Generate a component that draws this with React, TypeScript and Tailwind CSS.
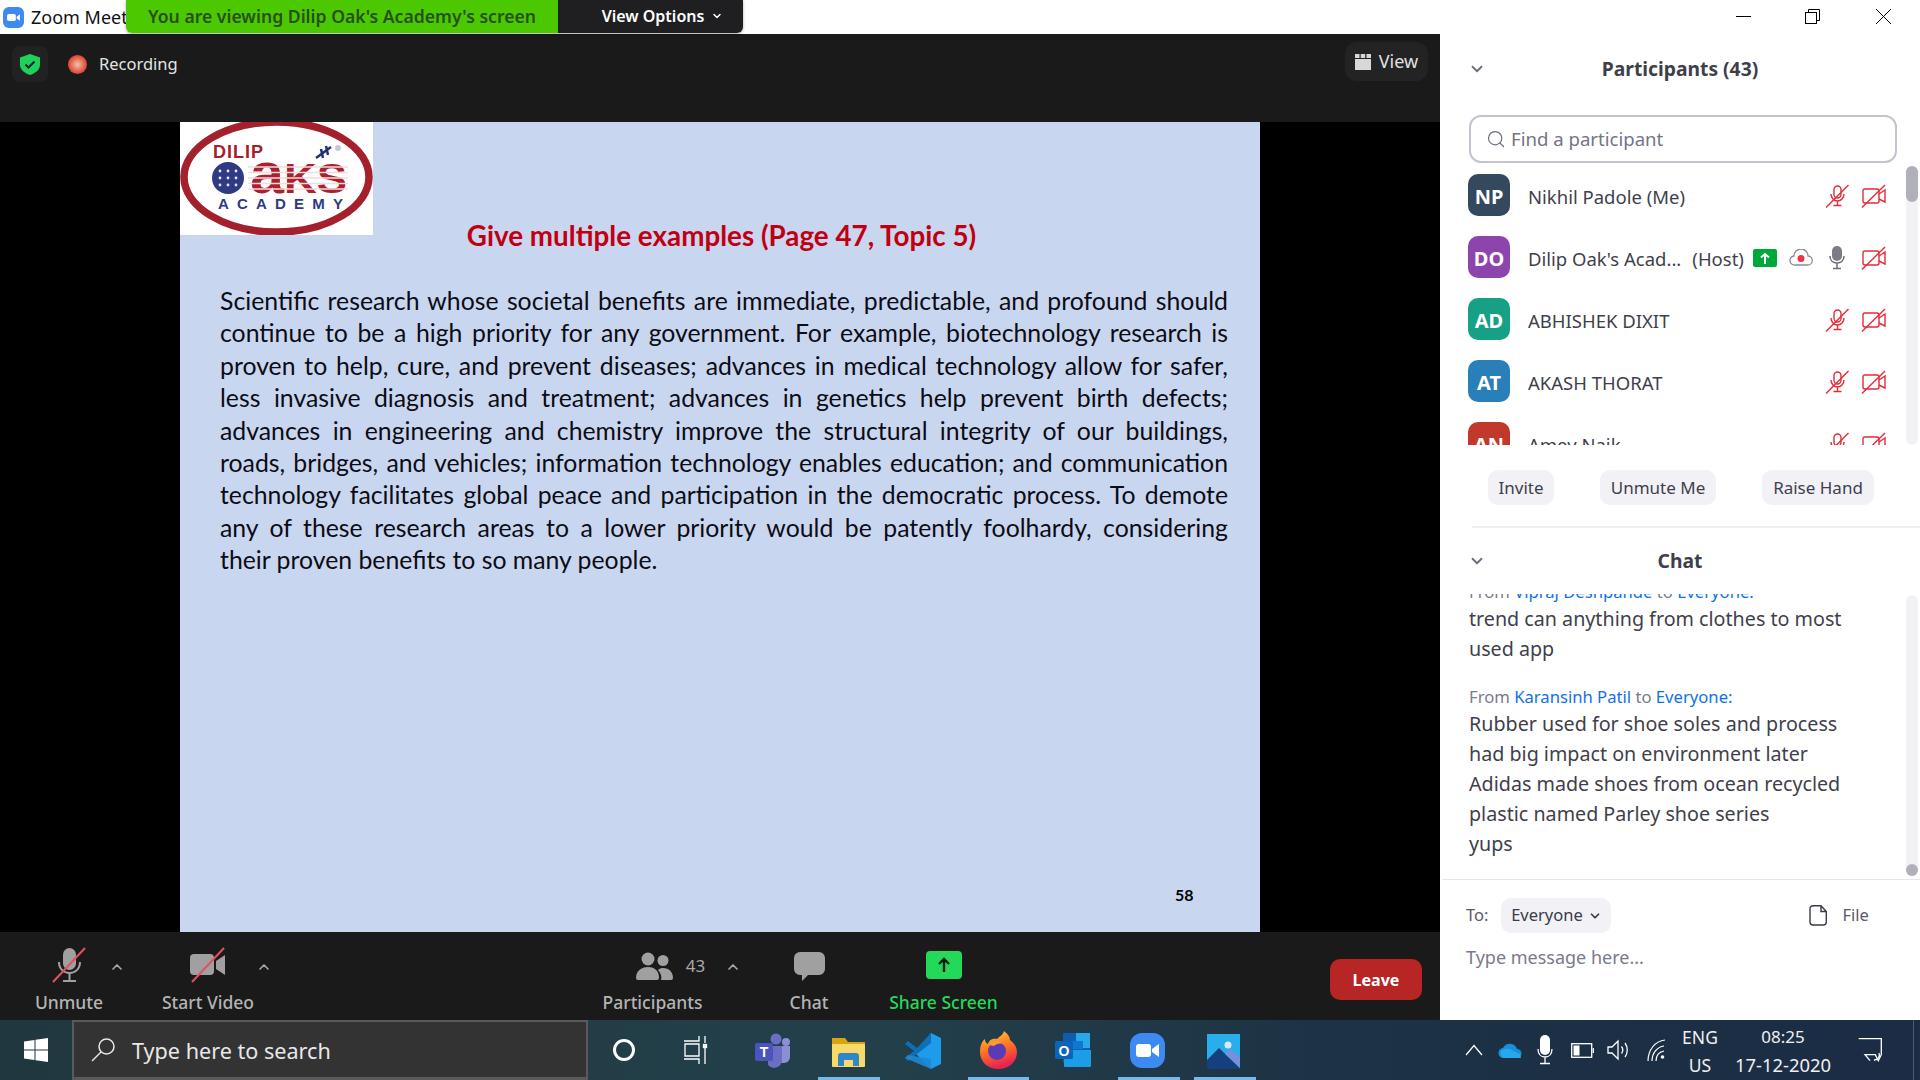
import { ChevronDown, ChevronUp, Search } from 'lucide-react'

const slideLines = [
  'Scientific research whose societal benefits are immediate, predictable, and profound should',
  'continue to be a high priority for any government. For example, biotechnology research is',
  'proven to help, cure, and prevent diseases; advances in medical technology allow for safer,',
  'less invasive diagnosis and treatment; advances in genetics help prevent birth defects;',
  'advances in engineering and chemistry improve the structural integrity of our buildings,',
  'roads, bridges, and vehicles; information technology enables education; and communication',
  'technology facilitates global peace and participation in the democratic process. To demote',
  'any of these research areas to a lower priority would be patently foolhardy, considering',
]

const participants = [
  { initials: 'NP', name: 'Nikhil Padole (Me)', color: 'bg-[#34495e]' },
  { initials: 'DO', name: "Dilip Oak's Acad...", color: 'bg-[#8e44ad]', host: true },
  { initials: 'AD', name: 'ABHISHEK DIXIT', color: 'bg-[#16a085]' },
  { initials: 'AT', name: 'AKASH THORAT', color: 'bg-[#2980b9]' },
  { initials: 'AN', name: 'Amey Naik', color: 'bg-[#c0392b]' },
]

function MutedMic({ color = '#e02d3c' }: { color?: string }) {
  return (
    <svg width="24" height="24" viewBox="0 0 24 24" fill="none" stroke={color} strokeWidth="1.4">
      <rect x="9" y="2" width="7" height="12" rx="3.5" />
      <path d="M6 10c0 4 3 7 6.5 7s6.5-3 6.5-7M12.5 17v4M8.5 21.500h8" />
      <path d="M1 23.500 23.500 1" />
    </svg>
  )
}

function MutedCam() {
  return (
    <svg width="25" height="24" viewBox="0 0 25 24" fill="none" stroke="#e02d3c" strokeWidth="1.4">
      <path d="M4 5h12a2 2 0 0 1 2 2v10a2 2 0 0 1-2 2H4a2 2 0 0 1-2-2V7a2 2 0 0 1 2-2z" />
      <path d="m18 10 6-4v12l-6-3" />
      <path d="M1 23.500 24 1" />
    </svg>
  )
}

function HostMic() {
  return (
    <svg width="16" height="24" viewBox="0 0 16 24">
      <rect x="3" y="0" width="10" height="15" rx="5" fill="#7c7c88" />
      <path d="M1 10c0 4.500 3 7 7 7s7-2.500 7-7M8 17v5M4 22.500h8" fill="none" stroke="#6d6d78" strokeWidth="1.500" />
    </svg>
  )
}

function ZoomGlyph({ size }: { size: number }) {
  return (
    <svg width={size} height={size} viewBox="0 0 36 36">
      <rect width="36" height="36" rx="10" fill="#3d8bf2" />
      <rect x="7" y="12" width="15" height="12" rx="3" fill="#fff" />
      <path d="m23.500 16.500 5.500-4v11l-5.500-4z" fill="#fff" />
    </svg>
  )
}

function DilipLogo() {
  return (
    <div className="w-[193px] h-[113px] bg-white">
      <svg width="193" height="113" viewBox="0 0 193 113">
        <ellipse cx="96.500" cy="55" rx="92.500" ry="55" fill="#fff" stroke="#a3202c" strokeWidth="7.500" />
        <text x="33" y="36" fontSize="18" fontFamily="Liberation Sans" fill="#a3202c" fontWeight="700" textLength="50">DILIP</text>
        <circle cx="48" cy="56" r="16" fill="#2f3a84" />
        <g fill="#e8e8f2">
          <circle cx="40" cy="49" r="1.400" /><circle cx="48" cy="49" r="1.400" /><circle cx="56" cy="49" r="1.400" />
          <circle cx="40" cy="56" r="1.400" /><circle cx="48" cy="56" r="1.400" /><circle cx="56" cy="56" r="1.400" />
          <circle cx="40" cy="63" r="1.400" /><circle cx="48" cy="63" r="1.400" /><circle cx="56" cy="63" r="1.400" />
        </g>
        <text x="70" y="71" fontFamily="Liberation Sans" fontWeight="700" fill="#a9212f" textLength="97" lengthAdjust="spacingAndGlyphs">
          <tspan fontSize="58">a</tspan>
          <tspan fontSize="43">KS</tspan>
        </text>
        <g stroke="#f3dcdc" strokeWidth="1.500">
          <path d="M68 45h100M68 50.500h100M68 56h100M68 61.500h100M68 67h100" />
        </g>
        <path d="M136 36l15-11M143 36l-2-9M148 33l-2-9" stroke="#24306e" strokeWidth="2.500" fill="none" />
        <circle cx="158" cy="26" r="3" fill="#c8c8d4" />
        <text x="38" y="87" fontSize="15" fontFamily="Liberation Sans" fontWeight="700" fill="#2f3a84" textLength="125">ACADEMY</text>
      </svg>
    </div>
  )
}

function ToolbarMic() {
  return (
    <svg width="34" height="36" viewBox="0 0 34 36">
      <rect x="11" y="1" width="13" height="22" rx="6.500" fill="#a0a0a0" />
      <path d="M7 15c0 7 5 11 10.500 11S28 22 28 15M17.500 26v7M11 34h13" fill="none" stroke="#a0a0a0" strokeWidth="2" />
      <path d="M1 35 33 1" stroke="#e5505c" strokeWidth="2" />
    </svg>
  )
}

function ToolbarCam() {
  return (
    <svg width="38" height="36" viewBox="0 0 38 36">
      <rect x="1" y="7" width="24" height="21" rx="4" fill="#a0a0a0" />
      <path d="m27 14 9-6v20l-9-6z" fill="#a0a0a0" />
      <path d="M3 35 35 1" stroke="#e5505c" strokeWidth="2" />
    </svg>
  )
}

function ToolbarPeople() {
  return (
    <svg width="37" height="28" viewBox="0 0 37 28" fill="#a0a0a0">
      <circle cx="12" cy="7" r="6.500" />
      <circle cx="27" cy="8.500" r="5.500" />
      <path d="M0 26c0-7 5-11 12-11s11 4 11 11a2 2 0 0 1-2 2H2a2 2 0 0 1-2-2z" />
      <path d="M25 28c1-3 0-7-3-10 1.500-1.500 3.500-2 5-2 6 0 10 4 10 10a2 2 0 0 1-2 2z" />
    </svg>
  )
}

function ToolbarChat() {
  return (
    <svg className="mt-[3px]" width="31" height="29" viewBox="0 0 31 29">
      <path d="M6 0h19a6 6 0 0 1 6 6v11a6 6 0 0 1-6 6H14l-6 6v-6H6a6 6 0 0 1-6-6V6a6 6 0 0 1 6-6z" fill="#a0a0a0" />
    </svg>
  )
}

function ToolbarItem({ label, icon, green, className }: { label: string; icon: React.ReactNode; green?: boolean; className: string }) {
  return (
    <div className={`flex flex-col items-center ${className}`}>
      <div className="h-[36px] flex items-center justify-center">{icon}</div>
      <span className={`mt-[7px] text-[17.500px] leading-[24px] font-medium whitespace-nowrap ${green ? 'text-[#23d959]' : 'text-[#b4b4b4]'}`}>
        {label}
      </span>
    </div>
  )
}

function Caret({ className }: { className: string }) {
  return <ChevronUp className={`w-[16px] h-[16px] text-[#a8a8a8] ${className}`} strokeWidth={2.5} />
}

function Toolbar() {
  return (
    <div className="h-[88px] bg-[#1a1a1a] flex items-start pt-[15px] font-['Noto_Sans',sans-serif]">
      <ToolbarItem label="Unmute" icon={<ToolbarMic />} className="ml-[36px] w-[66px]" />
      <Caret className="mt-[12px] ml-[7px]" />
      <ToolbarItem label="Start Video" icon={<ToolbarCam />} className="ml-[36px] w-[94px]" />
      <Caret className="mt-[12px] ml-[1px]" />
      <div className="ml-[332px] w-[97px] flex flex-col items-center">
        <div className="h-[36px] flex items-center gap-[13px] ml-[36px] mt-[1px]">
          <ToolbarPeople />
          <span className="text-[17px] text-[#a8a8a8] font-normal">43</span>
        </div>
        <span className="mt-[6px] text-[17.500px] leading-[24px] font-medium text-[#b4b4b4] whitespace-nowrap">Participants</span>
      </div>
      <Caret className="mt-[12px] ml-[24px]" />
      <ToolbarItem label="Chat" icon={<ToolbarChat />} className="ml-[48px] w-[40px]" />
      <ToolbarItem
        label="Share Screen"
        green
        icon={
          <div className="w-[36px] h-[28px] rounded-[4px] bg-[#23d959] flex items-center justify-center">
            <svg width="14" height="16" viewBox="0 0 14 16" fill="none" stroke="#0f1a10" strokeWidth="2.400">
              <path d="M7 15V2M2 7l5-5 5 5" />
            </svg>
          </div>
        }
        className="ml-[61px] w-[107px]"
      />
      <button className="ml-[333px] mt-[12px] w-[92px] h-[41px] rounded-[10px] bg-[#b72525] text-white text-[16px] font-bold">
        Leave
      </button>
    </div>
  )
}

function Meeting() {
  return (
    <div className="w-[1440px] flex flex-col relative">
      <div className="h-[34px] bg-white flex items-center pl-[3px] gap-[7px] font-['Noto_Sans',sans-serif] overflow-hidden">
        <ZoomGlyph size={21} />
        <span className="text-[18px] text-[#111] whitespace-nowrap">Zoom Meeting</span>
      </div>

      {/* view banner over the title bar */}
      <div className="absolute left-[126px] top-0 h-[33px] flex rounded-b-[6px] overflow-hidden font-['Noto_Sans',sans-serif] shadow-[0_1px_3px_rgba(0,0,0,0.35)]">
        <div className="w-[432px] bg-[#4bc800] flex items-center justify-center pb-[1px] text-[17.600px] font-semibold text-[#28501a]">
          You are viewing Dilip Oak&apos;s Academy&apos;s screen
        </div>
        <div className="w-[185px] bg-[#1f1f22] flex items-center justify-center gap-[7px] pl-[24px] pb-[2px] text-[16px] font-semibold text-white">
          View Options
          <ChevronDown className="w-[12px] h-[12px]" strokeWidth={3} />
        </div>
      </div>

      <div className="h-[88px] bg-[#1a1a1a] flex items-start px-[12px] pt-[12px] font-['Noto_Sans',sans-serif]">
        <div className="w-[36px] h-[36px] rounded-[8px] bg-[#222] flex items-center justify-center">
          <svg width="20" height="21" viewBox="0 0 20 21">
            <path d="M10 0 20 3.500v7c0 5-4 8.500-10 10.500C4 19 0 15.500 0 10.500v-7z" fill="#1fd15b" />
            <path d="m5.500 10.500 3 3 6-6" fill="none" stroke="#123" strokeWidth="2" />
          </svg>
        </div>
        <div className="ml-[20px] mt-[9px] w-[19px] h-[19px] rounded-full bg-[radial-gradient(circle,#f3c0b0_0%,#e0533e_60%,#b23a2c_100%)]" />
        <span className="ml-[12px] mt-[6px] text-[16.500px] leading-[24px] text-[#e4e4e4]">Recording</span>
        <div className="ml-auto mt-[-4px] mr-[0px] w-[83px] h-[39px] rounded-[12px] bg-[#232323] flex items-center justify-center gap-[8px]">
          <svg width="16" height="16" viewBox="0 0 16 16" fill="#d8d8d8">
            <rect x="0" y="0" width="4.500" height="4" />
            <rect x="5.700" y="0" width="4.500" height="4" />
            <rect x="11.500" y="0" width="4.500" height="4" />
            <rect x="0" y="5" width="16" height="11" />
          </svg>
          <span className="text-[18px] text-[#e0e0e0]">View</span>
        </div>
      </div>

      <div className="h-[810px] bg-black flex justify-start pl-[180px]">
        <div className="w-[1080px] h-full bg-[#c9d6f0] font-['Lato',sans-serif] flex flex-col">
          <div className="flex h-[113px]">
            <DilipLogo />
          </div>
          <h1 className="text-center mt-[-16px] pl-[3px] text-[27.800px] leading-[34px] font-bold text-[#c00010]">
            Give multiple examples (Page 47, Topic 5)
          </h1>
          <div className="ml-[40px] w-[1008px] mt-[32px] text-[24.800px] leading-[32.400px] text-[#0c0c14]">
            {slideLines.map((line) => (
              <div key={line} className="[text-align-last:justify]">{line}</div>
            ))}
            <div>their proven benefits to so many people.</div>
          </div>
          <div className="mt-auto mb-[27px] ml-[995px] text-[16px] font-bold text-black leading-[20px]">58</div>
        </div>
      </div>

      <Toolbar />
    </div>
  )
}

function Sidebar() {
  return (
    <div className="w-[480px] bg-white flex flex-col font-['Noto_Sans',sans-serif] text-[#3a3a48]">
      <div className="h-[34px] flex items-start text-black">
        <div className="ml-[296px] mt-[16px] w-[15px] h-[1px] bg-black" />
        <svg className="ml-[54px] mt-[9px]" width="15" height="15" viewBox="0 0 15 15" fill="none" stroke="#000">
          <rect x="0.500" y="3.500" width="11" height="11" />
          <path d="M3.500 3.500v-3h11v11h-3" />
        </svg>
        <svg className="ml-[56px] mt-[9px]" width="15" height="15" viewBox="0 0 15 15" fill="none" stroke="#000">
          <path d="m0 0 15 15M15 0 0 15" />
        </svg>
      </div>

      <div className="h-[70px] flex items-center relative">
        <ChevronDown className="absolute left-[28px] w-[18px] h-[18px] text-[#6e6e7e]" strokeWidth={2.5} />
        <h2 className="w-[482px] text-center text-[19.300px] font-bold text-[#3f3f4c]">Participants (43)</h2>
      </div>

      <div className="ml-[29px] mr-[23px] mt-[11px] h-[48px] border-2 border-[#c3c3d3] rounded-[12px] flex items-center pl-[15px] gap-[5px]">
        <Search className="w-[20px] h-[20px] text-[#6e7080]" strokeWidth={1.5} />
        <span className="text-[18.600px] text-[#747486]">Find a participant</span>
      </div>

      <div className="mt-[3px] h-[279px] flex relative overflow-hidden">
        <div className="flex-1 pt-[8px] pl-[28px] flex flex-col gap-[20px]">
          {participants.map((p) => (
            <div key={p.initials} className="flex items-center h-[42px] shrink-0">
              <div className={`w-[42px] h-[42px] pt-[3px] rounded-[10px] ${p.color} flex items-center justify-center text-white text-[20px] font-bold`}>
                {p.initials}
              </div>
              <span className="ml-[18px] pt-[4px] text-[18.500px] text-[#3f3f4c] whitespace-nowrap">{p.name}</span>
              {p.host && <span className="ml-[11px] pt-[4px] text-[18.500px] text-[#3f3f4c]">(Host)</span>}
              <div className="ml-auto mt-[2px] flex items-center">
                {p.host ? (
                  <>
                    <div className="w-[24px] h-[18px] rounded-[2px] bg-[#00a83a] flex items-center justify-center">
                      <svg width="10" height="12" viewBox="0 0 10 12" fill="none" stroke="#fff" strokeWidth="2">
                        <path d="M5 12V2M1 5.500 5 2l4 3.500" />
                      </svg>
                    </div>
                    <svg className="ml-[12px]" width="24" height="18" viewBox="0 0 24 18">
                      <path d="M6 16a4.500 4.500 0 0 1-1-9 7 7 0 0 1 14 0 4.500 4.500 0 0 1-.500 9z" fill="#fff" stroke="#8a8a94" strokeWidth="1.300" />
                      <circle cx="12" cy="9.500" r="3.500" fill="#f2303f" />
                    </svg>
                    <span className="ml-[16px] mr-[16px]"><HostMic /></span>
                  </>
                ) : (
                  <span className="mr-[12px]"><MutedMic /></span>
                )}
                <MutedCam />
              </div>
              <div className="w-[34px]" />
            </div>
          ))}
        </div>
        {/* scrollbar */}
        <div className="absolute right-[2px] top-0 bottom-0 w-[12px] rounded-[6px] bg-[#f1f1f6]">
          <div className="h-[36px] rounded-[6px] bg-[#b0b0ba]" />
        </div>
      </div>

      <div className="mt-[25px] flex text-[17px] text-[#3f3f4c]">
        <div className="ml-[48px] w-[66px] h-[35px] rounded-[10px] bg-[#f1f1f6] flex items-center justify-center">Invite</div>
        <div className="ml-[46px] w-[116px] h-[35px] rounded-[10px] bg-[#f1f1f6] flex items-center justify-center">Unmute Me</div>
        <div className="ml-[46px] w-[112px] h-[35px] rounded-[10px] bg-[#f1f1f6] flex items-center justify-center">Raise Hand</div>
      </div>

      <div className="mt-[21px] ml-[32px] h-[2px] bg-[#eeeeF2]" />

      <div className="h-[66px] flex items-center relative">
        <ChevronDown className="absolute left-[28px] w-[18px] h-[18px] text-[#6e6e7e]" strokeWidth={2.5} />
        <h2 className="w-[482px] text-center text-[19.300px] font-bold text-[#3f3f4c]">Chat</h2>
      </div>

      <div className="h-[285px] relative overflow-hidden flex flex-col justify-end pl-[29px] pb-[20px]">
        <div className="text-[16.650px] leading-[24px] text-[#7a7a8a] whitespace-nowrap">
          From <span className="text-[#0e71eb]">Vipraj Deshpande</span> to <span className="text-[#0e71eb]">Everyone:</span>
        </div>
        <div className="text-[19.700px] leading-[30px] text-[#3f3f4c]">
          <div>trend can anything from clothes to most</div>
          <div>used app</div>
        </div>
        <div className="mt-[21px] text-[16.650px] leading-[24px] text-[#7a7a8a] whitespace-nowrap">
          From <span className="text-[#0e71eb]">Karansinh Patil</span> to <span className="text-[#0e71eb]">Everyone:</span>
        </div>
        <div className="text-[19.700px] leading-[30px] text-[#3f3f4c]">
          <div>Rubber used for shoe soles and process</div>
          <div>had big impact on environment later</div>
          <div>Adidas made shoes from ocean recycled</div>
          <div>plastic named Parley shoe series</div>
          <div>yups</div>
        </div>
        <div className="absolute right-[2px] top-[1px] bottom-[3px] w-[12px] rounded-[6px] bg-[#f1f1f6]">
          <div className="absolute bottom-0 h-[12px] w-[12px] rounded-full bg-[#b0b0ba]" />
        </div>
      </div>

      <div className="ml-[2px] h-[1px] bg-[#e6e6ea]" />

      <div className="mt-[18px] flex items-center h-[35px] pl-[26px] text-[16.500px]">
        <span className="text-[#5a5a68]">To:</span>
        <div className="ml-[13px] w-[110px] h-[35px] rounded-[10px] bg-[#f1f1f6] flex items-center justify-center gap-[5px] text-[#3a3a48]">
          Everyone
          <ChevronDown className="w-[14px] h-[14px]" strokeWidth={3} />
        </div>
        <svg className="ml-[198px]" width="18" height="21" viewBox="0 0 18 21" fill="none" stroke="#3a3a48" strokeWidth="1.400">
          <path d="M4 .7h8l5.300 5.800V17a3 3 0 0 1-3 3H4a3 3 0 0 1-3-3V3.700a3 3 0 0 1 3-3zM12 .7v5.800h5.300" />
        </svg>
        <span className="ml-[15px] text-[#5a5a68]">File</span>
      </div>
      <div className="mt-[11px] pl-[26px] text-[18px] leading-[26px] text-[#7a7a8a]">Type message here...</div>
    </div>
  )
}

function TaskbarIcons() {
  return (
    <>
      <svg className="absolute left-[755px] top-[13px]" width="36" height="36" viewBox="0 0 36 36">
        <circle cx="21" cy="6" r="5.500" fill="#6b6fc4" />
        <circle cx="31" cy="9" r="4" fill="#8a8fd6" />
        <path d="M26 13h9v11a6 6 0 0 1-6 6h-3z" fill="#8a8fd6" />
        <path d="M13 13h14v15a8 8 0 0 1-14 4z" fill="#6b6fc4" />
        <rect x="0" y="10" width="18" height="18" rx="2" fill="#4b53bc" />
        <text x="9" y="24" textAnchor="middle" fontSize="14" fontWeight="700" fontFamily="Liberation Sans" fill="#fff">T</text>
      </svg>
      <svg className="absolute left-[832px] top-[17px]" width="33" height="30" viewBox="0 0 33 30">
        <path d="M0 1h13l3 4h17v24H0z" fill="#d9a40f" />
        <rect x="0" y="7" width="33" height="23" rx="1" fill="#f9d968" />
        <path d="M6 29V19a3 3 0 0 1 3-3h15a3 3 0 0 1 3 3v10h-6v-6H12v6z" fill="#2f87c9" />
      </svg>
      <svg className="absolute left-[905px] top-[13px]" width="36" height="36" viewBox="0 0 36 36">
        <path d="M26 0 36 5v26l-10 5L10 20z" fill="#1e9bea" />
        <path d="M26 0v10L12 21 3 28l-3-3 9-7-9-7 3-3 9 7z" fill="#0c6fb8" />
        <path d="M26 26v10L0 25l3-3z" fill="#1e88d4" opacity="0.900" />
      </svg>
      <svg className="absolute left-[980px] top-[11px]" width="37" height="38" viewBox="0 0 37 38">
        <defs>
          <linearGradient id="fx" x1="0" y1="0" x2="0.300" y2="1">
            <stop offset="0" stopColor="#ffd53d" />
            <stop offset="0.500" stopColor="#ff7a1f" />
            <stop offset="1" stopColor="#e8244f" />
          </linearGradient>
        </defs>
        <path d="M18 38C7 38 0 30 0 21 0 15 2 10 5 8c0 3 1 4 3 5 1-5 6-6 9-5 3-3 6-4 7-8 5 4 6 7 6 9 4 3 7 7 7 12 0 10-8 17-19 17z" fill="url(#fx)" />
        <circle cx="17" cy="20" r="9" fill="#5b3bb5" />
        <path d="M9 13c4-4 10-4 14 0-3-1-7 0-9 2-2 0-4-1-5-2z" fill="#ff9a2e" />
      </svg>
      <svg className="absolute left-[1055px] top-[12px]" width="36" height="36" viewBox="0 0 36 36">
        <rect x="8" y="1" width="27" height="30" rx="1" fill="#0f5da8" />
        <rect x="21" y="1" width="14" height="15" fill="#28a8ea" />
        <rect x="14" y="9" width="14" height="8" fill="#0f78d4" />
        <path d="M9 18h27v16a1 1 0 0 1-1 1H10a1 1 0 0 1-1-1z" fill="#1b9de8" />
        <rect x="0" y="9" width="18" height="18" rx="1.500" fill="#0a64b8" />
        <text x="9" y="23.500" textAnchor="middle" fontSize="14" fontWeight="700" fontFamily="Liberation Sans" fill="#fff">O</text>
      </svg>
      <div className="absolute left-[1130px] top-[13px]">
        <svg width="35" height="35" viewBox="0 0 35 35">
          <rect width="35" height="35" rx="12" fill="#3d8bf2" />
          <rect x="6" y="11" width="15" height="13" rx="3" fill="#fff" />
          <path d="m22 16 7-5v13l-7-5z" fill="#fff" />
        </svg>
      </div>
      <svg className="absolute left-[1207px] top-[14px]" width="33" height="35" viewBox="0 0 33 35">
        <rect width="33" height="35" fill="#2aaeeb" />
        <circle cx="21" cy="11" r="3.500" fill="#d8e9f5" />
        <path d="M0 26 12 14l21 20v1H0z" fill="#15407f" />
        <path d="M18 20l5-5 10 9v10z" fill="#7a8fdc" />
      </svg>
    </>
  )
}

function Taskbar() {
  return (
    <div className="h-[60px] relative bg-[linear-gradient(90deg,#20373f_0%,#23404a_45%,#1d3245_70%,#1b2c44_100%)] flex items-center font-['Noto_Sans',sans-serif] text-white">
      <svg className="ml-[24px]" width="24" height="24" viewBox="0 0 24 24" fill="#fff">
        <path d="M0 3.500 10.500 2v9.500H0zM11.500 1.800 24 0v11.500H11.500zM0 12.500h10.500V22L0 20.500zM11.500 12.500H24V24l-12.500-1.800z" />
      </svg>
      <div className="ml-[24px] w-[516px] h-[60px] bg-[#333] border-2 border-b-[3px] border-[#5a5a5a] flex items-center pl-[17px]">
        <svg width="25" height="25" viewBox="0 0 25 25" fill="none" stroke="#e8e8e8" strokeWidth="1.500">
          <circle cx="15.500" cy="9.500" r="7.500" />
          <path d="M10 15 1 24" />
        </svg>
        <span className="ml-[16px] pt-[4px] text-[21.600px] text-[#e8e8e8]">Type here to search</span>
      </div>
      <div className="ml-[25px] w-[22px] h-[22px] rounded-full border-[3px] border-white" />
      <svg className="ml-[49px]" width="24" height="30" viewBox="0 0 24 30" fill="none" stroke="#fff" strokeWidth="1.300">
        <path d="M0 6h15V1M0 24h15v5M1 9h14v12H1zM21 1v7M21 13v16" />
        <rect x="19.500" y="9.500" width="3" height="3" fill="#fff" />
      </svg>

      <TaskbarIcons />

      {/* running-app underlines */}
      <div className="absolute left-[818px] bottom-0 w-[62px] h-[3px] bg-[#76b9ed]" />
      <div className="absolute left-[968px] bottom-0 w-[61px] h-[3px] bg-[#76b9ed]" />
      <div className="absolute left-[1118px] bottom-0 w-[62px] h-[3px] bg-[#76b9ed]" />
      <div className="absolute left-[1194px] bottom-0 w-[62px] h-[3px] bg-[#76b9ed]" />

      <div className="ml-auto flex items-center">
        <svg width="18" height="12" viewBox="0 0 18 12" fill="none" stroke="#fff" strokeWidth="1.300">
          <path d="m1 11 8-9.500 8 9.500" />
        </svg>
        <svg className="ml-[15px]" width="24" height="16" viewBox="0 0 24 16">
          <path d="M6 16a5 5 0 0 1-1-10 7.500 7.500 0 0 1 14 1 4.500 4.500 0 0 1 0 9z" fill="#1490df" />
          <path d="M3 9c4-3 9-3 12 0l7 3 1 4H6a5 5 0 0 1-3-7z" fill="#28a8ea" />
        </svg>
        <svg className="ml-[15px]" width="16" height="30" viewBox="0 0 16 30">
          <rect x="3" y="0" width="10" height="20" rx="5" fill="#fff" />
          <path d="M1 14c0 5 3 8 7 8s7-3 7-8M8 22v6M3 28.500h10" fill="none" stroke="#fff" strokeWidth="1.300" />
        </svg>
        <svg className="ml-[18px]" width="23" height="15" viewBox="0 0 23 15" fill="none" stroke="#fff" strokeWidth="1.300">
          <rect x="0.700" y="0.700" width="20" height="13.600" />
          <rect x="2.500" y="2.500" width="6" height="10" fill="#fff" stroke="none" />
          <path d="M22.300 5v5" />
        </svg>
        <svg className="ml-[13px]" width="23" height="22" viewBox="0 0 23 22" fill="none" stroke="#fff" strokeWidth="1.300">
          <path d="M1 8v6h4l6 6V2L5 8zM14.500 7.500c1.500 2 1.500 5 0 7M18 4c3 4 3 10 0 14" />
        </svg>
        <svg className="ml-[17px]" width="19" height="22" viewBox="0 0 19 22" fill="none" stroke="#fff" strokeWidth="1.200">
          <path d="M1 22C1 11 8 2 18 1M5 22c0-8 5-14 12-15M9 22c0-5 3-9 8-10" />
          <circle cx="15.500" cy="18" r="1.800" fill="#fff" stroke="none" />
        </svg>
        <div className="ml-[16px] w-[36px] pt-[2px] flex flex-col items-center text-[17.500px] leading-[28px] text-[#f0f0f0]">
          <span>ENG</span>
          <span>US</span>
        </div>
        <div className="ml-[17px] w-[96px] pt-[2px] flex flex-col items-center text-[17px] leading-[28px] text-[#f0f0f0] whitespace-nowrap">
          <span>08:25</span>
          <span className="text-[18.400px]">17-12-2020</span>
        </div>
        <svg className="ml-[27px] mr-[38px]" width="24" height="24" viewBox="0 0 24 24" fill="none" stroke="#fff" strokeWidth="1.300">
          <path d="M.7.700h22.600v16l-3 6-3-6H7l5 6" />
          <path d="M21 15a5 5 0 0 1-5 7" />
        </svg>
      </div>
      <div className="absolute right-[6px] top-0 bottom-0 w-[1px] bg-[#4a5a6e]" />
    </div>
  )
}

export default function App() {
  return (
    <div className="w-[1920px] h-[1080px] overflow-hidden flex flex-col">
      <div className="h-[1020px] flex">
        <Meeting />
        <Sidebar />
      </div>
      <Taskbar />
    </div>
  )
}
